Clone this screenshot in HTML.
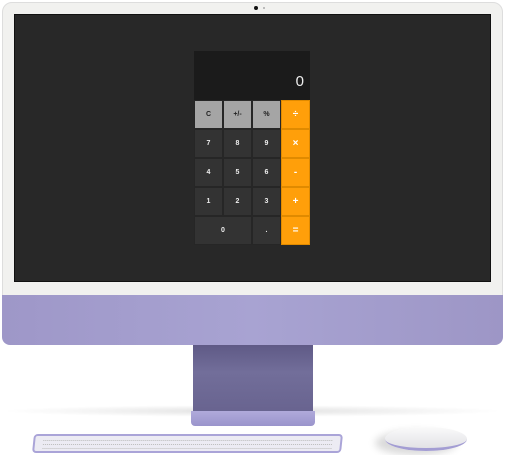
<!DOCTYPE html><html><head><style>
*{margin:0;padding:0;box-sizing:border-box}
body{width:505px;height:455px;background:#fff;position:relative;overflow:hidden;font-family:"Liberation Sans",sans-serif}
.bez{position:absolute;left:2px;top:2px;width:501px;height:300px;background:#f1f1ef;border-radius:10px 10px 0 0;border:1px solid #ddd}
.scr{position:absolute;left:14px;top:14px;width:477px;height:268px;background:#282828;border:1px solid #111}
.chin{position:absolute;left:2px;top:295px;width:501px;height:50px;background:linear-gradient(90deg,#9e97c8,#a8a3d2 50%,#9d96c6);border-radius:0 0 8px 8px}
.stand{position:absolute;left:193px;top:345px;width:120px;height:68px;background:linear-gradient(#5f5a86,#726e9a 40%,#68638f)}
.foot{position:absolute;left:191px;top:411px;width:124px;height:15px;background:linear-gradient(#b0aadb,#9a94cc);border-radius:0 0 4px 4px}
.shadow{position:absolute;left:0;top:405px;width:505px;height:12px;background:radial-gradient(ellipse at center,rgba(0,0,0,.12),rgba(0,0,0,0) 70%)}
.kb{position:absolute;left:33px;top:434px;width:309px;height:19px;background:#ecebf3;border:2px solid #aaa4d8;border-radius:4px;transform:skewX(-6deg)}
.kb i{position:absolute;left:8px;right:8px;height:1px;border-top:1px dotted #bbb}
.mouse{position:absolute;left:385px;top:427px;width:82px;height:24px;background:linear-gradient(#fafafa,#e2e2e6);border-radius:50%;border-bottom:3px solid #a39dd3;box-shadow:-10px 4px 8px rgba(0,0,0,.15)}
.calc{position:absolute;left:194px;top:51px;width:116px;height:194px;background:#2e2e2e}
.disp{height:49px;background:#1b1b1b;color:#eee;font-size:15px;text-align:right;padding:22px 6px 0 0}
.g{display:grid;grid-template-columns:29px 29px 29px 29px;grid-auto-rows:29px;height:145px}
.g div{display:flex;align-items:center;justify-content:center;font-size:7px;font-weight:bold;color:#eee;background:#333;border:0.5px solid #262626}
.g .l{background:#a5a5a5;color:#222}
.g .o{background:#ff9f0a;color:#fff;font-size:10px;border-color:#e08a00}
.g .z{grid-column:span 2}
</style></head><body>
<div class="shadow"></div>
<div class="bez"></div>
<div style="position:absolute;left:254px;top:6px;width:4px;height:4px;border-radius:50%;background:#111"></div>
<div style="position:absolute;left:263px;top:7px;width:2px;height:2px;border-radius:50%;background:#aaa"></div>
<div class="scr"></div>
<div class="chin"></div>
<div class="stand"></div>
<div class="foot"></div>
<div class="kb"><i style="top:4px"></i><i style="top:8px"></i><i style="top:12px"></i></div>
<div class="mouse"></div>
<div class="calc"><div class="disp">0</div>
<div class="g">
<div class="l">C</div><div class="l">+/-</div><div class="l">%</div><div class="o">÷</div>
<div>7</div><div>8</div><div>9</div><div class="o">×</div>
<div>4</div><div>5</div><div>6</div><div class="o">-</div>
<div>1</div><div>2</div><div>3</div><div class="o">+</div>
<div class="z">0</div><div>.</div><div class="o">=</div>
</div></div>
</body></html>
